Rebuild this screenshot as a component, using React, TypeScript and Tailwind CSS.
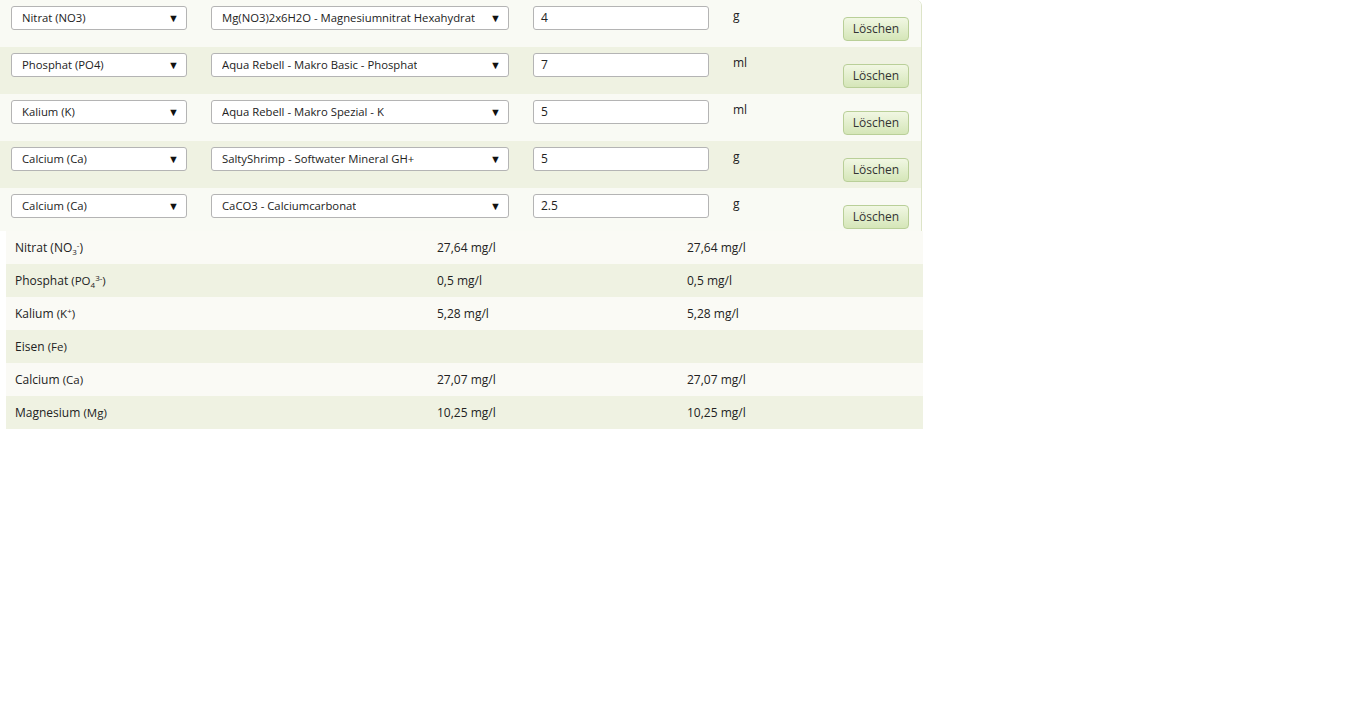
import React from 'react';

const doses = [
  { element: 'Nitrat (NO3)', product: 'Mg(NO3)2x6H2O - Magnesiumnitrat Hexahydrat', amount: '4', unit: 'g' },
  { element: 'Phosphat (PO4)', product: 'Aqua Rebell - Makro Basic - Phosphat', amount: '7', unit: 'ml' },
  { element: 'Kalium (K)', product: 'Aqua Rebell - Makro Spezial - K', amount: '5', unit: 'ml' },
  { element: 'Calcium (Ca)', product: 'SaltyShrimp - Softwater Mineral GH+', amount: '5', unit: 'g' },
  { element: 'Calcium (Ca)', product: 'CaCO3 - Calciumcarbonat', amount: '2.5', unit: 'g' },
];

function FakeSelect({ value, width }: { value: string; width: string }) {
  return (
    <div className={`${width} h-[24px] bg-white border border-[#b4b4b4] rounded-[3px] flex items-center justify-between pl-[10px] pr-[7px] text-[11.3px] text-[#222]`}>
      <span className="truncate">{value}</span>
      <span className="text-[11px] text-[#111]">▼</span>
    </div>
  );
}

function Label({ name, sym, big }: { name: string; sym: React.ReactNode; big?: boolean }) {
  return (
    <span className="leading-none">
      {name} <span className={big ? 'text-[12px]' : 'text-[11.5px]'}>({sym})</span>
    </span>
  );
}

const Sub = ({ children }: { children: React.ReactNode }) => (
  <span className="text-[8px] relative top-[3px] leading-none">{children}</span>
);
const Sup = ({ children }: { children: React.ReactNode }) => (
  <span className="text-[8px] relative -top-[4px] leading-none">{children}</span>
);

const results: { label: React.ReactNode; a: string; b: string }[] = [
  { label: <Label big name="Nitrat" sym={<>NO<Sub>3</Sub><Sup>-</Sup></>} />, a: '27,64 mg/l', b: '27,64 mg/l' },
  { label: <Label name="Phosphat" sym={<>PO<Sub>4</Sub><Sup>3-</Sup></>} />, a: '0,5 mg/l', b: '0,5 mg/l' },
  { label: <Label name="Kalium" sym={<>K<Sup>+</Sup></>} />, a: '5,28 mg/l', b: '5,28 mg/l' },
  { label: <Label name="Eisen" sym="Fe" />, a: '', b: '' },
  { label: <Label name="Calcium" sym="Ca" />, a: '27,07 mg/l', b: '27,07 mg/l' },
  { label: <Label name="Magnesium" sym="Mg" />, a: '10,25 mg/l', b: '10,25 mg/l' },
];

export default function App() {
  return (
    <div className="w-[1345px] h-[726px] bg-white font-['Open_Sans',sans-serif] text-[#222]">
      {/* Dosing rows */}
      <div className="w-[922px] border-r border-[#dde4c8] rounded-tr-[6px] overflow-hidden">
        {doses.map((d, i) => (
          <div
            key={i}
            className={`${i === doses.length - 1 ? 'h-[43px]' : 'h-[47px]'} flex items-start pt-[6px] pl-[11px] ${i % 2 === 0 ? 'bg-[#f9faf4]' : 'bg-[#eff2e2]'}`}
          >
            <FakeSelect value={d.element} width="w-[176px]" />
            <div className="ml-[24px]">
              <FakeSelect value={d.product} width="w-[298px]" />
            </div>
            <div className="ml-[24px] w-[176px] h-[24px] bg-white border border-[#b4b4b4] rounded-[3px] flex items-center pl-[7px] text-[12px]">
              {d.amount}
            </div>
            <div className="ml-[24px] w-[110px] text-[12px] leading-[18px] mt-[1px]">{d.unit}</div>
            <button className="mt-[11px] w-[66px] h-[24px] rounded-[4px] border border-[#b9cf98] bg-gradient-to-b from-[#f1f7e3] to-[#d5e6b8] text-[12px] text-[#333]">
              Löschen
            </button>
          </div>
        ))}
      </div>

      {/* Results */}
      <div className="ml-[6px] w-[917px] text-[12px]">
        {results.map((r, i) => (
          <div
            key={i}
            className={`h-[33px] flex items-center ${i % 2 === 0 ? 'bg-[#fafaf5]' : 'bg-[#eff2e2]'}`}
          >
            <div className="w-[422px] pl-[9px]">{r.label}</div>
            <div className="w-[250px] pl-[9px]">{r.a}</div>
            <div className="flex-1 pl-[9px]">{r.b}</div>
          </div>
        ))}
      </div>
    </div>
  );
}
